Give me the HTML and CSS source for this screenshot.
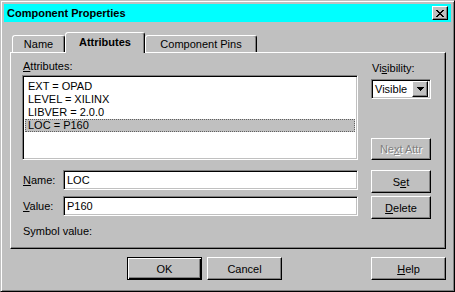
FILE: index.html
```html
<!DOCTYPE html>
<html lang="en">

<head>
    <meta charset="UTF-8">
    <title>Component Properties</title>
    <link rel="stylesheet" href="styles.css">
</head>

<body>
    <div class="window">
        <div class="titlebar">
            <span class="title">Component Properties</span>
            <button class="close-btn" type="button">
                <svg width="8" height="7" viewBox="0 0 8 7" shape-rendering="crispEdges">
                    <path d="M0 0h2v1H0zM6 0h2v1H6zM1 1h2v1H1zM5 1h2v1H5zM2 2h4v1H2zM3 3h2v1H3zM2 4h4v1H2zM1 5h2v1H1zM5 5h2v1H5zM0 6h2v1H0zM6 6h2v1H6z" fill="#000"/>
                </svg>
            </button>
        </div>

        <div class="dialog-body">
            <div class="tabs">
                <div class="tab tab-name">Name</div>
                <div class="tab tab-attrs active">Attributes</div>
                <div class="tab tab-pins">Component Pins</div>
            </div>

            <div class="tab-panel">
                <div class="attr-section">
                    <div class="attr-main">
                        <div class="label"><u>A</u>ttributes:</div>
                        <ul class="listbox">
                            <li>EXT = OPAD</li>
                            <li>LEVEL = XILINX</li>
                            <li>LIBVER = 2.0.0</li>
                            <li class="selected">LOC = P160</li>
                        </ul>
                    </div>
                    <div class="side">
                        <div class="label vis-label">Vi<u>s</u>ibility:</div>
                        <div class="combo">
                            <span class="combo-text">Visible</span>
                            <span class="combo-btn">
                                <svg width="7" height="4" viewBox="0 0 7 4" shape-rendering="crispEdges">
                                    <path d="M0 0h7v1H0zM1 1h5v1H1zM2 2h3v1H2zM3 3h1v1H3z" fill="#000"/>
                                </svg>
                            </span>
                        </div>
                        <button class="btn side-btn next-btn" type="button" disabled>Ne<u>x</u>t Attr</button>
                    </div>
                </div>

                <div class="edit-section">
                    <div class="fields">
                        <div class="field-row">
                            <label for="attrName"><u>N</u>ame:</label>
                            <input class="textbox" id="attrName" type="text" value="LOC">
                        </div>
                        <div class="field-row">
                            <label for="attrValue"><u>V</u>alue:</label>
                            <input class="textbox" id="attrValue" type="text" value="P160">
                        </div>
                        <div class="label symbol-label">Symbol value:</div>
                    </div>
                    <div class="side side-buttons">
                        <button class="btn side-btn" type="button">S<u>e</u>t</button>
                        <button class="btn side-btn" type="button"><u>D</u>elete</button>
                    </div>
                </div>
            </div>

            <div class="footer">
                <button class="btn default ok-btn" type="button">OK</button>
                <button class="btn" type="button">Cancel</button>
                <button class="btn help-btn" type="button"><u>H</u>elp</button>
            </div>
        </div>
    </div>
</body>

</html>
```

FILE: styles.css
```css
* {
    box-sizing: border-box;
}

body {
    margin: 0;
    font-family: "Liberation Sans", Arial, sans-serif;
    font-size: 11px;
    color: #000;
    background: #c0c0c0;
}

.window {
    width: 455px;
    height: 292px;
    border: 1px solid;
    border-color: #c0c0c0 #000 #000 #c0c0c0;
    box-shadow: inset 1px 1px #fff, inset -1px -1px #808080;
    padding: 3px;
}

.titlebar {
    height: 18px;
    background: #00ffff;
    display: flex;
    align-items: center;
    padding: 0 3px 0 3px;
}

.title {
    flex: 1;
    font-weight: bold;
}

.close-btn {
    width: 16px;
    height: 14px;
    padding: 0;
    background: #c0c0c0;
    border: 1px solid;
    border-color: #fff #000 #000 #fff;
    box-shadow: inset -1px -1px #808080;
    display: flex;
    align-items: center;
    justify-content: center;
}

.close-btn svg {
    display: block;
}

.dialog-body {
    padding: 10px 5px 0 6px;
}

/* tabs */
.tabs {
    display: flex;
    align-items: flex-end;
    height: 20px;
    padding-left: 2px;
}

.tab {
    height: 17px;
    display: flex;
    align-items: center;
    justify-content: center;
    border: 1px solid;
    border-bottom: none;
    border-color: #fff #000 transparent #fff;
    border-radius: 3px 3px 0 0;
    box-shadow: inset -1px 0 #808080;
    background: #c0c0c0;
}

.tab-name {
    width: 53px;
}

.tab-attrs {
    width: 80px;
}

.tab-pins {
    width: 112px;
}

.tab.active {
    height: 21px;
    margin-bottom: -1px;
    font-weight: bold;
    padding-bottom: 2px;
    position: relative;
    z-index: 1;
}

.tab-panel {
    height: 197px;
    border: 1px solid;
    border-color: #fff #000 #000 #fff;
    box-shadow: inset -1px -1px #808080;
    padding: 7px 14px 0 11px;
}

.label {
    height: 13px;
    line-height: 13px;
    padding-left: 1px;
}

.attr-section {
    display: flex;
    gap: 13px;
}

.attr-main {
    width: 336px;
}

.listbox {
    list-style: none;
    margin: 2px 0 0;
    padding: 4px 2px 0;
    height: 85px;
    background: #fff;
    border: 1px solid;
    border-color: #808080 #fff #fff #808080;
    box-shadow: inset 1px 1px #000, inset -1px -1px #c0c0c0;
}

.listbox li {
    height: 13px;
    line-height: 13px;
    padding-left: 3px;
}

.listbox li.selected {
    background: #c0c0c0;
    outline: 1px dotted #606060;
    outline-offset: -1px;
}

.side {
    width: 60px;
    display: flex;
    flex-direction: column;
}

.vis-label {
    margin-top: 2px;
}

.combo {
    margin-top: 4px;
    height: 20px;
    display: flex;
    align-items: center;
    background: #fff;
    border: 1px solid;
    border-color: #808080 #fff #fff #808080;
    box-shadow: inset 1px 1px #000, inset -1px -1px #c0c0c0;
    padding: 2px 2px 2px 3px;
}

.combo-text {
    flex: 1;
}

.combo-btn {
    width: 16px;
    height: 16px;
    display: flex;
    align-items: center;
    justify-content: center;
    background: #c0c0c0;
    border: 1px solid;
    border-color: #fff #000 #000 #fff;
    box-shadow: inset -1px -1px #808080;
}

.combo-btn svg {
    display: block;
}

/* buttons */
.btn {
    font: inherit;
    color: #000;
    width: 75px;
    height: 23px;
    padding: 0;
    background: #c0c0c0;
    border: 1px solid;
    border-color: #fff #000 #000 #fff;
    box-shadow: inset -1px -1px #808080;
}

.btn.default {
    border-color: #000;
    box-shadow: inset 1px 1px #fff, inset -1px -1px #000, inset -2px -2px #808080;
}

.btn:disabled {
    color: #808080;
    text-shadow: 1px 1px #fff;
}

.side-btn {
    width: 60px;
}

.next-btn {
    margin-top: auto;
    height: 22px;
}

.edit-section {
    display: flex;
    gap: 13px;
    margin-top: 10px;
}

.fields {
    width: 336px;
    display: flex;
    flex-direction: column;
    gap: 6px;
}

.field-row {
    display: flex;
    align-items: center;
}

.field-row label {
    width: 41px;
    padding-left: 1px;
}

.textbox {
    flex: 1;
    height: 20px;
    font: inherit;
    color: #000;
    padding: 0 3px;
    background: #fff;
    border: 1px solid;
    border-color: #808080 #fff #fff #808080;
    box-shadow: inset 1px 1px #000, inset -1px -1px #c0c0c0;
    outline: none;
}

.symbol-label {
    margin-top: 3px;
}

.side-buttons {
    gap: 3px;
}

.footer {
    display: flex;
    margin-top: 8px;
}

.ok-btn {
    margin-left: 117px;
    margin-right: 5px;
}

.help-btn {
    margin-left: auto;
}
```
